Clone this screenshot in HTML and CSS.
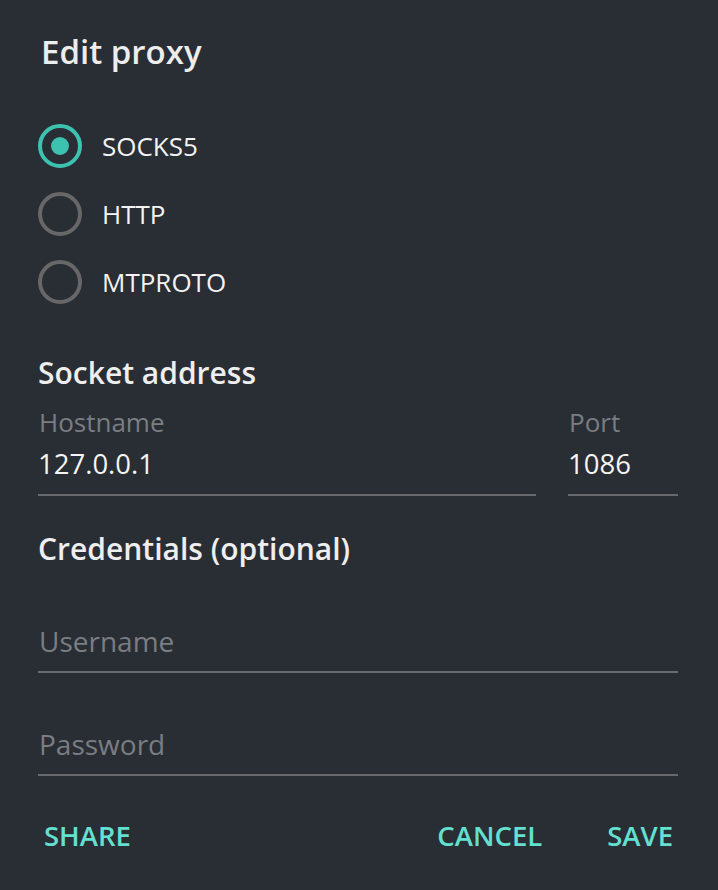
FILE: index.html
```html
<!DOCTYPE html>
<html>
<head>
<meta charset="utf-8">
<link rel="stylesheet" href="styles.css">
</head>
<body>
<div class="box">
  <h1 class="title">Edit proxy</h1>
  <div class="radios">
    <div class="radio-row"><span class="radio checked"><span class="dot"></span></span><span class="radio-label">SOCKS5</span></div>
    <div class="radio-row"><span class="radio"></span><span class="radio-label">HTTP</span></div>
    <div class="radio-row"><span class="radio"></span><span class="radio-label">MTPROTO</span></div>
  </div>
  <h2 class="section first">Socket address</h2>
  <div class="field-row">
    <div class="field host">
      <div class="field-label">Hostname</div>
      <div class="field-value">127.0.0.1</div>
    </div>
    <div class="field port">
      <div class="field-label">Port</div>
      <div class="field-value">1086</div>
    </div>
  </div>
  <h2 class="section second">Credentials (optional)</h2>
  <div class="field single user">
    <div class="field-value placeholder">Username</div>
  </div>
  <div class="field single pass">
    <div class="field-value placeholder">Password</div>
  </div>
  <div class="footer">
    <span class="btn">SHARE</span>
    <div class="right">
      <span class="btn">CANCEL</span>
      <span class="btn">SAVE</span>
    </div>
  </div>
</div>
</body>
</html>
```
FILE: styles.css
```css
html, body {
  margin: 0;
  padding: 0;
  background: #292d34;
  width: 718px;
  height: 890px;
  overflow: hidden;
}
.box {
  font-family: "Open Sans", "Noto Sans", sans-serif;
  color: #f1f1f1;
  padding: 28px 40px 0 38px;
}
.title {
  margin: 0 0 0 3px;
  font-size: 33px;
  font-weight: 600;
  line-height: 48px;
  color: #ededed;
}
.radios {
  margin-top: 36px;
}
.radio-row {
  display: flex;
  align-items: center;
  height: 68px;
}
.radio {
  box-sizing: border-box;
  width: 44px;
  height: 44px;
  border-radius: 50%;
  border: 4px solid #676767;
  display: flex;
  align-items: center;
  justify-content: center;
  flex-shrink: 0;
}
.radio.checked {
  border-color: #3ec2b0;
}
.dot {
  width: 18px;
  height: 18px;
  border-radius: 50%;
  background: #3ec2b0;
}
.radio-label {
  margin-left: 20px;
  font-size: 26px;
  line-height: 68px;
  color: #f3f3f3;
}
.section {
  margin: 0;
  font-size: 30px;
  font-weight: 600;
  line-height: 40px;
  color: #eeeeee;
}
.section.first { margin-top: 37px; }
.section.second { margin-top: 33px; }
.field-row {
  display: flex;
  gap: 32px;
  margin-top: 14px;
}
.field {
  border-bottom: 2px solid #68696c;
  padding-bottom: 10px;
}
.field.host { flex: 1; }
.field.port { width: 110px; }
.field-label {
  font-size: 26px;
  line-height: 30px;
  color: #7a7d82;
  margin-bottom: 7px;
  padding-left: 1px;
}
.field-value {
  font-size: 27.5px;
  line-height: 40px;
  color: #f5f5f5;
}
.field.single { padding-bottom: 10px; }
.field.user { margin-top: 52px; }
.field.pass { margin-top: 51px; }
.placeholder {
  color: #7a7d82;
  font-size: 28px;
  padding-left: 1px;
}
.footer {
  display: flex;
  justify-content: space-between;
  margin-top: 40px;
  padding: 0 5px 0 6px;
}
.right {
  display: flex;
  gap: 65px;
}
.btn {
  font-size: 27.5px;
  font-weight: 600;
  line-height: 40px;
  color: #64e0d0;
}
```
